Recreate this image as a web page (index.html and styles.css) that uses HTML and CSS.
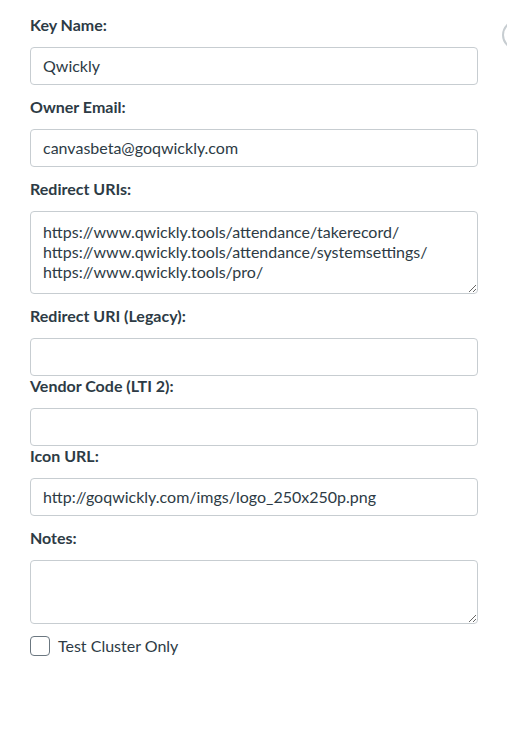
FILE: index.html
```html
<html>
<head>
  <title>Developer Key</title>
  <link rel="stylesheet" href="styles.css">
</head>
<body>
  <div class="round-btn"></div>

  <form class="key-form">
    <div class="field">
      <label for="key-name">Key Name:</label>
      <input type="text" id="key-name" value="Qwickly">
    </div>

    <div class="field">
      <label for="email">Owner Email:</label>
      <input type="text" id="email" value="canvasbeta@goqwickly.com">
    </div>

    <div class="field">
      <label for="uris">Redirect URIs:</label>
      <textarea id="uris" class="uris">https://www.qwickly.tools/attendance/takerecord/
https://www.qwickly.tools/attendance/systemsettings/
https://www.qwickly.tools/pro/</textarea>
    </div>

    <div class="field tight">
      <label for="legacy">Redirect URI (Legacy):</label>
      <input type="text" id="legacy">
    </div>

    <div class="field tight">
      <label for="vendor">Vendor Code (LTI 2):</label>
      <input type="text" id="vendor">
    </div>

    <div class="field">
      <label for="icon">Icon URL:</label>
      <input type="text" id="icon" value="http://goqwickly.com/imgs/logo_250x250p.png">
    </div>

    <div class="field">
      <label for="notes">Notes:</label>
      <textarea id="notes" class="notes"></textarea>
    </div>

    <label class="check">
      <input type="checkbox" id="test-cluster">
      <span class="box"></span>
      Test Cluster Only
    </label>
  </form>
</body>
</html>
```

FILE: styles.css
```css
body {
  margin: 0;
  font-family: Lato, "Open Sans", sans-serif;
  color: #2d3b45;
  background: #fff;
  position: relative;
  overflow: hidden;
}

.key-form {
  width: 448px;
  padding: 15px 0 0 30px;
}

.field {
  margin-bottom: 12px;
}

.field.tight {
  margin-bottom: 0;
}

.field label {
  display: block;
  font-size: 16px;
  font-weight: 700;
  line-height: 20px;
  margin-bottom: 12px;
}

input[type="text"], textarea {
  display: block;
  box-sizing: border-box;
  width: 100%;
  margin: 0;
  border: 1px solid #c7cdd1;
  border-radius: 4px;
  font-family: Lato, "Open Sans", sans-serif;
  font-size: 16px;
  color: #2d3b45;
  background: #fff;
  outline: none;
}

input[type="text"] {
  height: 38px;
  padding: 0 12px 2px;
}

textarea {
  padding: 10px 12px;
  line-height: 20px;
}

.uris {
  height: 83px;
  overflow: hidden;
}

.notes {
  height: 64px;
}

.check {
  display: flex;
  align-items: center;
  gap: 8px;
  font-size: 16px;
  line-height: 20px;
}

.check input {
  display: none;
}

.check .box {
  width: 20px;
  height: 20px;
  box-sizing: border-box;
  border: 1px solid #6b7780;
  border-radius: 4px;
}

.round-btn {
  position: absolute;
  left: 502px;
  top: 20px;
  width: 26px;
  height: 26px;
  border: 2px solid #c7cdd1;
  border-radius: 50%;
}
```
